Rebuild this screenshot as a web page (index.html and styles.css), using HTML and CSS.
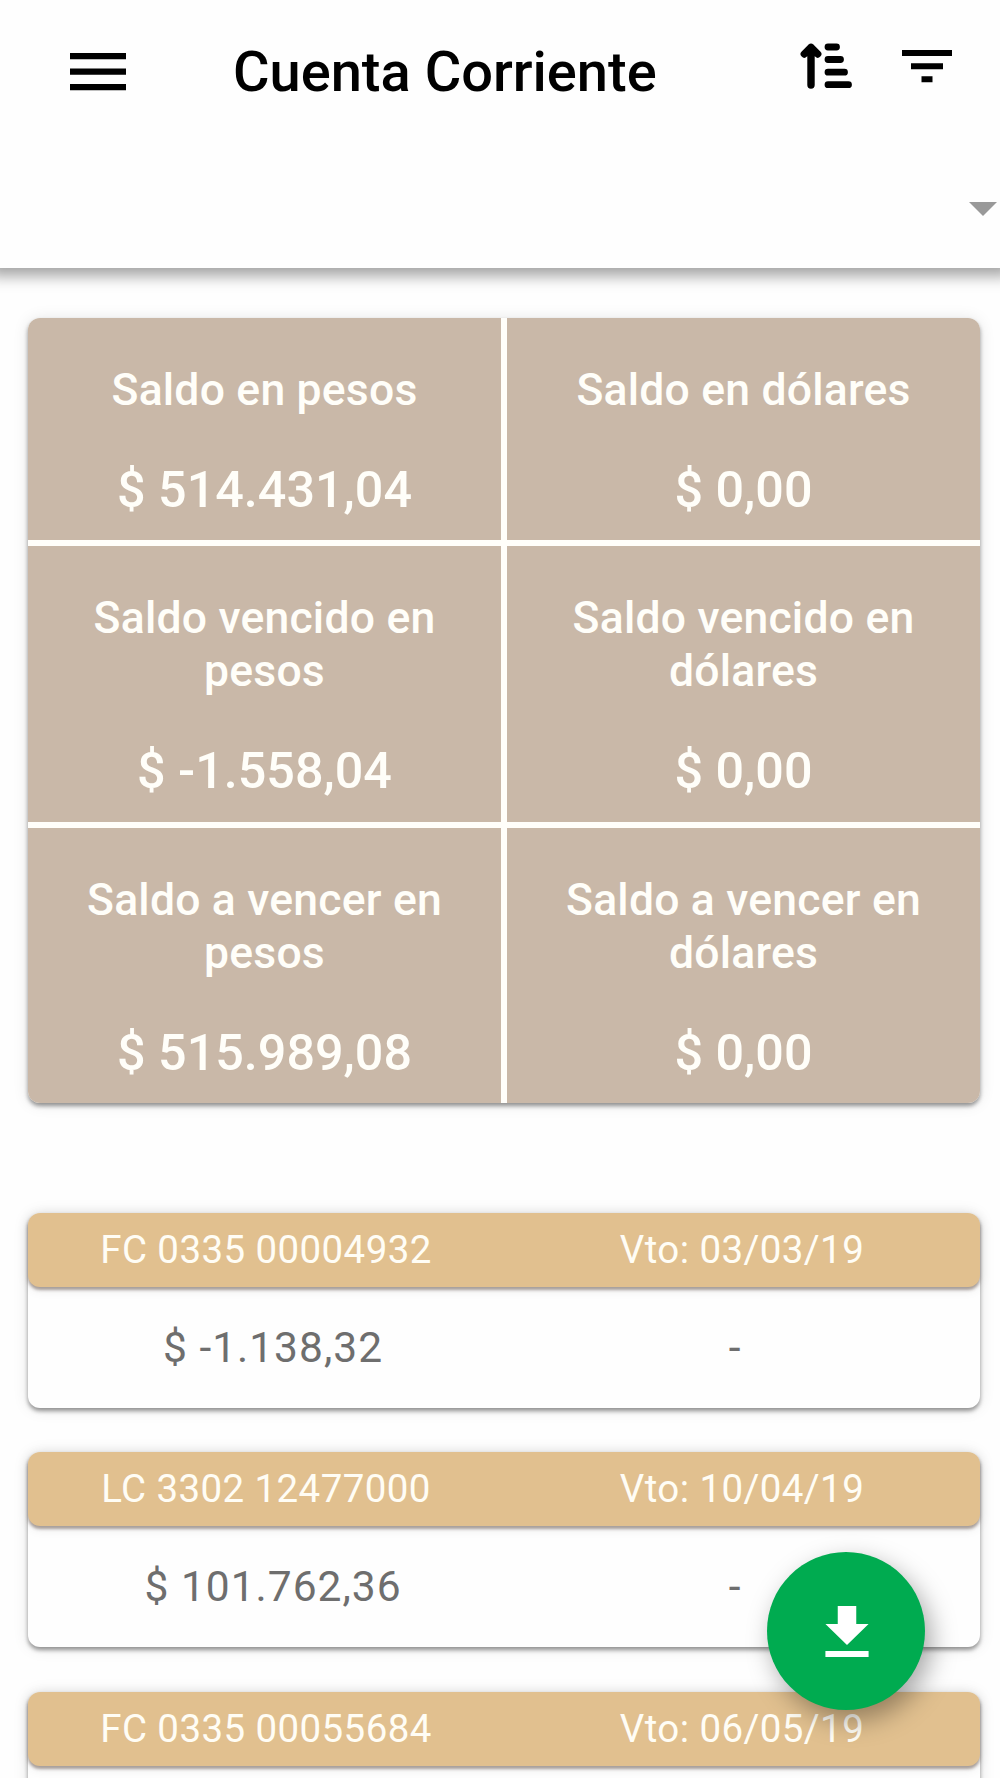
FILE: index.html
```html
<!DOCTYPE html>
<html lang="es">
<head>
    <meta charset="UTF-8">
    <meta name="viewport" content="width=device-width, initial-scale=1.0">
    <title>Cuenta Corriente</title>
    <link rel="stylesheet" href="styles.css">
</head>
<body>
    <!-- Header -->
    <header class="header">
        <div class="toolbar">
            <svg class="icon-menu" viewBox="0 0 56 38">
                <path d="M0 0h56v6.3H0zM0 15.5h56v6.3H0zM0 31h56v6.3H0z"/>
            </svg>
            <h1 class="title">Cuenta Corriente</h1>
            <svg class="icon-sort" viewBox="0 0 52 46">
                <path d="M11 42V4.5M4.3 11l6.7-6.7 6.7 6.7" stroke-width="7.4"/>
                <path d="M28 4h8.5M28 16.5h12.5M28 29.2h16.5M28 41.7h20.5" stroke-width="6.8"/>
            </svg>
            <svg class="icon-filter" viewBox="0 0 50 33">
                <path d="M0 0h50v6H0zM9 13.2h32v6H9zM19.5 26.3h11v6h-11z"/>
            </svg>
        </div>
        <div class="selector">
            <span class="caret"></span>
        </div>
    </header>

    <main class="content">
        <!-- Balances -->
        <section class="summary">
            <div class="balance">
                <p class="label">Saldo en pesos</p>
                <p class="value">$ 514.431,04</p>
            </div>
            <div class="balance">
                <p class="label">Saldo en dólares</p>
                <p class="value">$ 0,00</p>
            </div>
            <div class="balance">
                <p class="label">Saldo vencido en pesos</p>
                <p class="value">$ -1.558,04</p>
            </div>
            <div class="balance">
                <p class="label">Saldo vencido en dólares</p>
                <p class="value">$ 0,00</p>
            </div>
            <div class="balance">
                <p class="label">Saldo a vencer en pesos</p>
                <p class="value">$ 515.989,08</p>
            </div>
            <div class="balance">
                <p class="label">Saldo a vencer en dólares</p>
                <p class="value">$ 0,00</p>
            </div>
        </section>

        <!-- Vouchers -->
        <section class="vouchers">
            <article class="voucher">
                <div class="voucher-head"><span>FC 0335 00004932</span><span>Vto: 03/03/19</span></div>
                <div class="voucher-body"><span>$ -1.138,32</span><span>-</span></div>
            </article>
            <article class="voucher">
                <div class="voucher-head"><span>LC 3302 12477000</span><span>Vto: 10/04/19</span></div>
                <div class="voucher-body"><span>$ 101.762,36</span><span>-</span></div>
            </article>
            <article class="voucher">
                <div class="voucher-head"><span>FC 0335 00055684</span><span>Vto: 06/05/19</span></div>
                <div class="voucher-body"></div>
            </article>
        </section>
    </main>

    <!-- Download button -->
    <button class="fab" aria-label="Descargar">
        <svg viewBox="0 0 24 24" preserveAspectRatio="none"><path d="M19 9h-4V3H9v6H5l7 7 7-7zM5 18v2h14v-2H5z"/></svg>
    </button>
</body>
</html>
```

FILE: styles.css
```css
/* Global Styles */
* {
    margin: 0;
    padding: 0;
    box-sizing: border-box;
}
body {
    font-family: Roboto, sans-serif;
    height: 1778px;
    overflow: hidden;
    background: #fefefe;
}

/* Header */
.header {
    height: 268px;
    background: #fefefe;
    box-shadow: 0 -3px 14px 11px rgba(0, 0, 0, 0.36);
}
.toolbar {
    display: flex;
    align-items: flex-start;
    height: 144px;
    padding-left: 70px;
}
.icon-menu {
    width: 56px;
    height: 38px;
    margin-top: 53px;
}
.title {
    width: 420px;
    margin: 40px 0 0 107px;
    font-size: 56px;
    font-weight: 500;
    line-height: 64px;
    white-space: nowrap;
    color: #000;
}
.icon-sort {
    width: 52px;
    height: 46px;
    margin: 43px 0 0 147px;
    fill: none;
    stroke: #000;
    stroke-linecap: round;
    stroke-linejoin: round;
}
.icon-filter {
    width: 50px;
    height: 33px;
    margin: 50px 0 0 50px;
}
.selector {
    display: flex;
    justify-content: flex-end;
    padding: 57.5px 3px 0 0;
}
.caret {
    border: 14px solid transparent;
    border-top-color: #999;
    border-bottom: none;
}

/* Balances */
.content {
    padding: 50px 20px 0 28px;
}
.summary {
    display: grid;
    grid-template-columns: 1fr 1fr;
    grid-template-rows: 222px 276px 275px;
    gap: 6px;
    background: #fffefa;
    border-radius: 12px;
    overflow: hidden;
    box-shadow: 0 3px 4px rgba(0, 0, 0, 0.4), 0 1px 16px rgba(0, 0, 0, 0.1);
}
.balance {
    padding: 46px 50px 0;
    background: #c9b8a8;
    color: #fffef9;
    text-align: center;
    font-weight: 500;
}
.label {
    font-size: 44.5px;
    line-height: 53px;
    letter-spacing: 0.2px;
}
.value {
    margin-top: 43px;
    font-size: 50.3px;
    line-height: 60px;
}

/* Vouchers */
.vouchers {
    margin-top: 110px;
}
.voucher {
    height: 195px;
    margin-bottom: 44.4px;
    background: #fefefe;
    border-radius: 12px;
    box-shadow: 0 3px 4px rgba(0, 0, 0, 0.4), 0 1px 16px rgba(0, 0, 0, 0.1);
}
.voucher-head,
.voucher-body {
    display: grid;
    grid-template-columns: 1fr 1fr;
    text-align: center;
}
.voucher-head {
    height: 74px;
    background: #e1c08f;
    color: #fffdf5;
    font-size: 38.5px;
    line-height: 73px;
    letter-spacing: 0.4px;
    border-radius: 12px;
    box-shadow: 0 3px 3px rgba(80, 60, 50, 0.45), 0 2px 12px rgba(0, 0, 0, 0.1);
}
.voucher-body {
    padding: 31px 14px 0;
    color: #6e6e6e;
    font-size: 42.5px;
    line-height: 60px;
    letter-spacing: 1px;
}

/* Download button */
.fab {
    position: absolute;
    left: 767px;
    top: 1552px;
    display: flex;
    align-items: center;
    justify-content: center;
    width: 158px;
    height: 158px;
    border: none;
    border-radius: 50%;
    background: #00ab50;
    box-shadow: 6px 10px 26px rgba(0, 0, 0, 0.35);
}
.fab svg {
    width: 74px;
    height: 72px;
    margin: 3px 0 0 1px;
    fill: #fff;
}
```
